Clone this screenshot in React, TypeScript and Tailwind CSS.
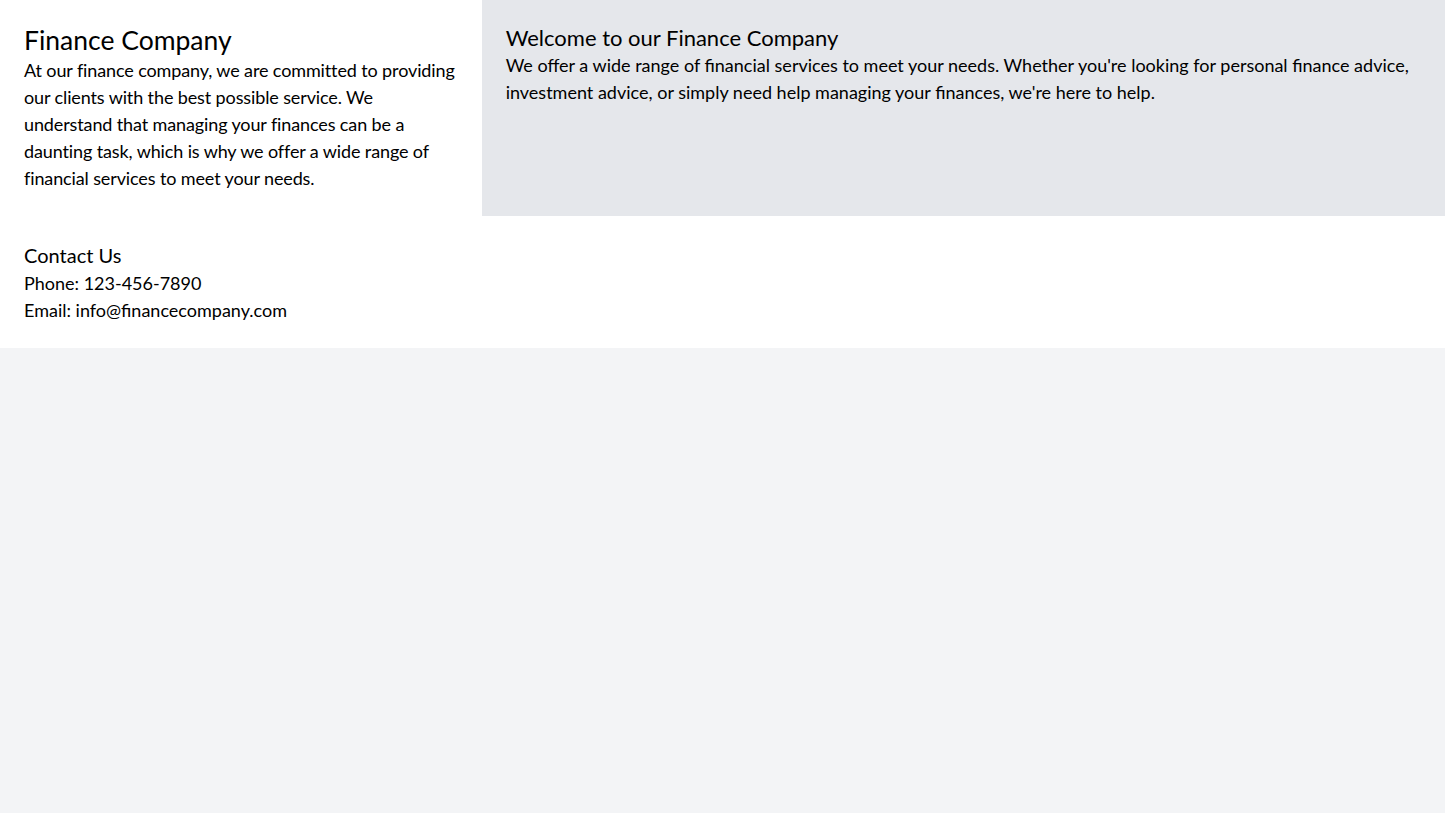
import React from 'react'

const App: React.FC = () => {
  return (
    <div className="min-h-screen bg-gray-100 text-black font-['Lato',sans-serif]">
      <div className="flex">
        {/* Left: intro */}
        <div className="w-1/3 bg-white p-6">
          <h1 className="text-[26.5px] leading-[33px]">Finance Company</h1>
          <p className="text-lg leading-[27px] tracking-[-0.12px]">
            At our finance company, we are committed to providing our clients with the best possible service. We
            understand that managing your finances can be a daunting task, which is why we offer a wide range of
            financial services to meet your needs.
          </p>
        </div>

        {/* Right: welcome */}
        <div className="w-2/3 bg-gray-200 p-6">
          <h2 className="text-[22px] leading-7">Welcome to our Finance Company</h2>
          <p className="text-lg leading-[27px]">
            We offer a wide range of financial services to meet your needs. Whether you're looking for personal
            finance advice, investment advice, or simply need help managing your finances, we're here to help.
          </p>
        </div>
      </div>

      {/* Contact */}
      <footer className="bg-white p-6">
        <h2 className="text-xl leading-[30px]">Contact Us</h2>
        <p className="text-lg leading-[27px]">Phone: 123-456-7890</p>
        <p className="text-lg leading-[27px]">Email: info@financecompany.com</p>
      </footer>
    </div>
  )
}

export default App
